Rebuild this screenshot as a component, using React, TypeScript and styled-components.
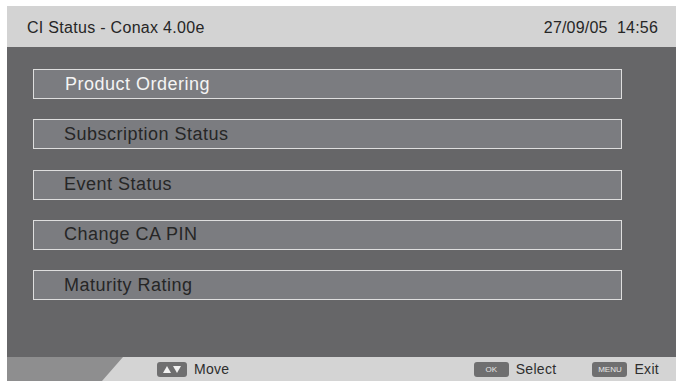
import React from "react";
import styled, { createGlobalStyle } from "styled-components";

const GlobalStyle = createGlobalStyle`
  html, body {
    margin: 0;
    padding: 0;
    background: #ffffff;
    font-family: "Liberation Sans", Arial, sans-serif;
  }
`;

const menuItems = [
  "Product Ordering",
  "Subscription Status",
  "Event Status",
  "Change CA PIN",
  "Maturity Rating",
];

export default function App() {
  return (
    <>
      <GlobalStyle />
      <Screen>
        <Panel>
          <Header>
            <HeaderTitle>CI Status - Conax 4.00e</HeaderTitle>
            <HeaderClock>27/09/05&nbsp;&nbsp;14:56</HeaderClock>
          </Header>
          <Body>
            {menuItems.map((label, i) => (
              <MenuItem key={label} $active={i === 0}>
                {label}
              </MenuItem>
            ))}
          </Body>
          <Footer>
            <FooterTab />
            <Hint $offset={34}>
              <KeyCap $w={30}>
                <svg width="20" height="9" viewBox="0 0 20 9">
                  <polygon points="1,8 9,8 5,1" fill="#f2f2f2" />
                  <polygon points="11,1 19,1 15,8" fill="#f2f2f2" />
                </svg>
              </KeyCap>
              Move
            </Hint>
            <Spacer />
            <Hint $offset={0}>
              <KeyCap $w={35}>OK</KeyCap>
              Select
            </Hint>
            <Hint $offset={36}>
              <KeyCap $w={35}>MENU</KeyCap>
              Exit
            </Hint>
          </Footer>
        </Panel>
      </Screen>
    </>
  );
}

const Screen = styled.div`
  width: 679px;
  height: 382px;
  padding: 6px 3px 1px 7px;
  box-sizing: border-box;
  background: #ffffff;
`;

const Panel = styled.div`
  display: flex;
  flex-direction: column;
  height: 100%;
  background: #666668;
`;

const Header = styled.div`
  display: flex;
  align-items: center;
  justify-content: space-between;
  height: 41px;
  padding: 2px 18px 0 20px;
  box-sizing: border-box;
  background: #d3d3d3;
  color: #262626;
  font-size: 16px;
  letter-spacing: 0.3px;
`;

const HeaderTitle = styled.span``;

const HeaderClock = styled.span`
  letter-spacing: 0.2px;
`;

const Body = styled.div`
  flex: 1;
  display: flex;
  flex-direction: column;
  gap: 20.25px;
  padding: 22px 0 0 26px;
`;

const MenuItem = styled.div<{ $active: boolean }>`
  width: 589px;
  height: 30px;
  box-sizing: border-box;
  display: flex;
  align-items: center;
  padding-left: ${(p) => (p.$active ? 31 : 30)}px;
  background: #7b7c80;
  border: 1.5px solid #dedede;
  color: ${(p) => (p.$active ? "#f4f4f4" : "#262626")};
  font-size: 18px;
  letter-spacing: 0.5px;
`;

const Footer = styled.div`
  display: flex;
  align-items: center;
  height: 24px;
  padding-right: 17px;
  background: #d4d4d4;
  color: #2e2e2e;
  font-size: 14px;
  letter-spacing: 0.3px;
`;

const FooterTab = styled.div`
  align-self: stretch;
  width: 116px;
  background: #8e8e8f;
  clip-path: polygon(0 0, 100% 0, calc(100% - 21px) 100%, 0 100%);
`;

const Hint = styled.div<{ $offset: number }>`
  display: flex;
  align-items: center;
  gap: 7px;
  margin-left: ${(p) => p.$offset}px;
`;

const KeyCap = styled.span<{ $w: number }>`
  display: inline-flex;
  align-items: center;
  justify-content: center;
  width: ${(p) => p.$w}px;
  height: 15px;
  border-radius: 3px;
  background: #6f6f70;
  color: #e6e6e6;
  font-size: 8px;
  letter-spacing: 0;
`;

const Spacer = styled.div`
  flex: 1;
`;
